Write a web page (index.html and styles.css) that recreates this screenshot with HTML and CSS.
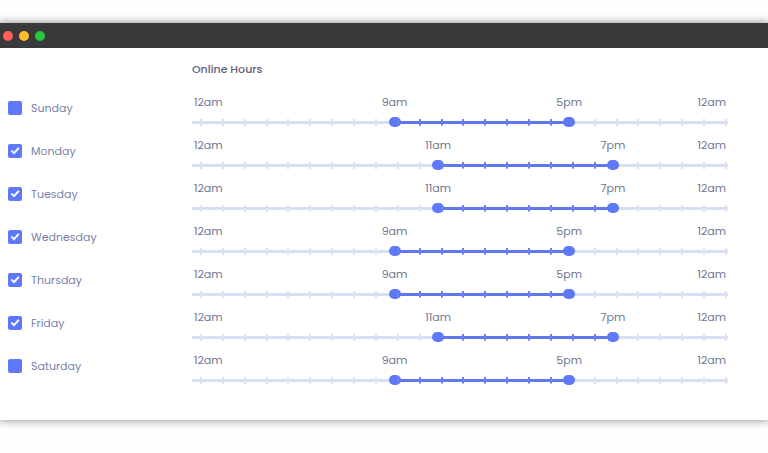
FILE: index.html
```html
<!DOCTYPE html>
<html lang="en">
<head>
  <meta charset="UTF-8">
  <meta name="viewport" content="width=device-width, initial-scale=1.0">
  <title>Online Hours</title>
  <link rel="stylesheet" href="styles.css">
</head>
<body>
  <div class="window">
    <div class="titlebar">
      <span class="dot red"></span>
      <span class="dot yellow"></span>
      <span class="dot green"></span>
    </div>
    <main class="content">
      <h1>Online Hours</h1>
      <div id="days"></div>
    </main>
  </div>
  <script>
    const days = [
      { name: 'Sunday', on: false, from: 9, to: 17 },
      { name: 'Monday', on: true, from: 11, to: 19 },
      { name: 'Tuesday', on: true, from: 11, to: 19 },
      { name: 'Wednesday', on: true, from: 9, to: 17 },
      { name: 'Thursday', on: true, from: 9, to: 17 },
      { name: 'Friday', on: true, from: 11, to: 19 },
      { name: 'Saturday', on: false, from: 9, to: 17 }
    ];

    function hourLabel(h) {
      return (h % 12 || 12) + (h % 24 < 12 ? 'am' : 'pm');
    }

    const list = document.getElementById('days');
    days.forEach((day) => {
      const row = document.createElement('div');
      row.className = 'row';
      row.style.setProperty('--from', day.from);
      row.style.setProperty('--to', day.to);
      row.innerHTML = `
        <label class="day">
          <input type="checkbox" ${day.on ? 'checked' : ''}>
          <span>${day.name}</span>
        </label>
        <div class="hours">
          <div class="labels">
            <span>${hourLabel(0)}</span>
            <span class="value value-from">${hourLabel(day.from)}</span>
            <span class="value value-to">${hourLabel(day.to)}</span>
            <span>${hourLabel(24)}</span>
          </div>
          <div class="slider">
            <div class="rail"></div>
            <div class="rail active"></div>
            <input type="range" class="from" min="0" max="24" value="${day.from}" aria-label="${day.name} start">
            <input type="range" class="to" min="0" max="24" value="${day.to}" aria-label="${day.name} end">
          </div>
        </div>
      `;
      const from = row.querySelector('.from');
      const to = row.querySelector('.to');
      row.querySelector('.slider').addEventListener('input', (e) => {
        if (+from.value > +to.value) {
          if (e.target === from) from.value = to.value;
          else to.value = from.value;
        }
        row.style.setProperty('--from', from.value);
        row.style.setProperty('--to', to.value);
        row.querySelector('.value-from').textContent = hourLabel(+from.value);
        row.querySelector('.value-to').textContent = hourLabel(+to.value);
      });
      list.appendChild(row);
    });
  </script>
</body>
</html>
```

FILE: styles.css
```css
* { box-sizing: border-box; }
body { margin: 0; padding: 23px 0; background: #fefefe; color: #6f7590; font-family: Poppins, Inter, "Open Sans", sans-serif; font-size: 11px; }

.window { background: #fff; box-shadow: 0 0 8px 1px rgba(0, 0, 0, 0.4); }
.titlebar { display: flex; align-items: center; gap: 6px; height: 25px; padding: 1px 3px 0; background: #39393b; }
.dot { width: 10px; height: 10px; border-radius: 50%; }
.red { background: #ff5f57; }
.yellow { background: #febc2e; }
.green { background: #28c840; }

.content { padding: 12px 40px 27px 8px; }
h1 { margin: 0 0 14px 184px; font-size: 11px; line-height: 18px; font-weight: 500; color: #62617a; }

.row { display: grid; grid-template-columns: 184px 1fr; height: 43px; }
.day { display: flex; align-items: center; justify-self: start; gap: 9px; height: 32px; color: #7b7fa9; cursor: pointer; }
.day input { appearance: none; display: grid; place-items: center; width: 14px; height: 14px; margin: 0; border-radius: 2px; background: #5f78fa; cursor: pointer; }
.day input:checked::before { content: ""; width: 10px; height: 8px; background: #fff; clip-path: polygon(6% 50%, 20% 36%, 39% 60%, 81% 4%, 96% 18%, 40% 94%); }

.labels { position: relative; display: flex; justify-content: space-between; padding: 0 2px; line-height: 20px; }
/* thumbs are 12px wide, so their centres travel 100% - 12px */
.value { position: absolute; top: 0; transform: translateX(-50%); }
.value-from { left: calc(6px + (100% - 12px) * var(--from) / 24); }
.value-to { left: calc(6px + (100% - 12px) * var(--to) / 24); }

.slider { display: grid; align-items: center; height: 20px; --line: #d9dff2; --tick: #dde1f3; }
.slider > * { grid-area: 1 / 1; }
.rail {
  height: 7px;
  background:
    repeating-linear-gradient(to right, var(--tick) 0 2px, transparent 2px calc((100% - 3px) / 24)) 8px 0 / calc(100% - 8px) 100% no-repeat,
    linear-gradient(var(--line), var(--line)) 0 2px / 100% 3px no-repeat;
}
.active {
  --line: #5f78f0;
  --tick: #6880f2;
  clip-path: inset(0 calc(6px + (100% - 12px) * (24 - var(--to)) / 24) 0 calc(6px + (100% - 12px) * var(--from) / 24));
}

.slider input { appearance: none; width: 100%; height: 10px; margin: 0; background: none; pointer-events: none; }
.slider input::-webkit-slider-thumb { appearance: none; width: 12px; height: 10px; border-radius: 5px; background: #5f78fa; pointer-events: auto; cursor: pointer; }
.slider input::-moz-range-thumb { width: 12px; height: 10px; border: 0; border-radius: 5px; background: #5f78fa; pointer-events: auto; cursor: pointer; }
```
